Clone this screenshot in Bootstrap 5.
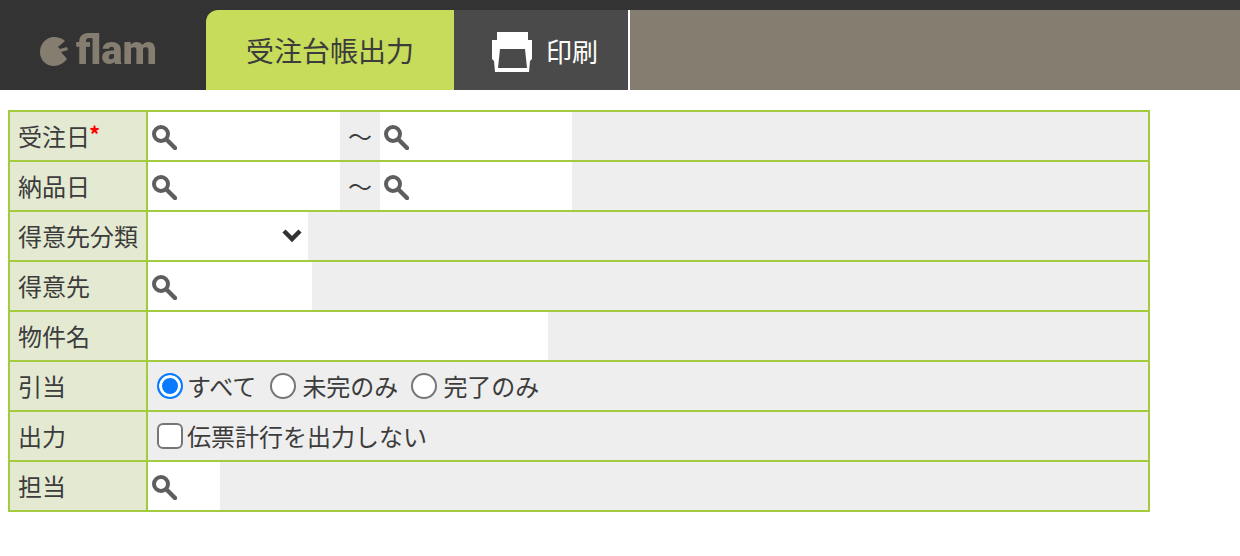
<!DOCTYPE html>
<html lang="ja">

<head>
    <meta charset="UTF-8">
    <meta name="viewport" content="width=device-width, initial-scale=1.0">
    <title>受注台帳出力</title>
    <link href="https://cdn.jsdelivr.net/npm/bootstrap@5.3.0/dist/css/bootstrap.min.css" rel="stylesheet">
    <style>
        body {
            background-color: #fff;
            color: #3c3c3c;
            font-family: "Noto Sans CJK JP", "Liberation Sans", sans-serif;
            font-size: 24px;
        }

        .app-header {
            height: 90px;
            padding-top: 10px;
            background-color: #333;
        }

        .app-logo {
            width: 206px;
            padding: 2px 0 0 40px;
            gap: 8px;
            color: #857d70;
        }

        .app-logo svg {
            filter: blur(.6px);
        }

        .app-logo span {
            font-family: Roboto, sans-serif;
            font-size: 40px;
            font-weight: 900;
            line-height: 1;
            filter: blur(.6px);
        }

        .tab-active {
            width: 248px;
            background-color: #c6dc5a;
            border-top-left-radius: 12px;
            font-size: 28px;
        }

        .tab-print {
            width: 176px;
            background-color: #4a4a4a;
            border-right: 2px solid #fff;
            color: #fff;
            font-size: 26px;
            padding-left: 38px;
            gap: 14px;
        }

        .tab-print svg {
            margin-top: 4px;
            filter: blur(.5px);
        }

        .header-rest {
            background-color: #857d70;
        }

        .form-area {
            padding: 20px 0 0 8px;
        }

        .order-form {
            width: 1142px;
            table-layout: fixed;
            --bs-table-color: #3c3c3c;
        }

        .order-form tr {
            height: 50px;
        }

        .order-form > tbody > tr > th,
        .order-form > tbody > tr > td {
            border: 2px solid #a4ca3f;
            vertical-align: middle;
        }

        .order-form > tbody > tr > th {
            width: 138px;
            padding: 0 0 0 8px;
            --bs-table-bg: #e4ead2;
            font-weight: 400;
            line-height: 48px;
            white-space: nowrap;
        }

        .order-form > tbody > tr > td {
            padding: 0;
            --bs-table-bg: #eee;
        }

        .req-mark {
            color: #f00;
            font-weight: 700;
            font-size: 22px;
            vertical-align: 3px;
            line-height: 1;
            margin-left: -1px;
        }

        .field-box {
            position: relative;
            height: 48px;
            flex: none;
        }

        .field-box .form-control,
        .field-box .form-select {
            height: 48px;
            border: 0;
            border-radius: 0;
            box-shadow: none;
        }

        .field-box .form-select {
            background-size: 20px 16px;
            background-position: right 6px center;
            background-image: url("data:image/svg+xml,%3csvg xmlns='http://www.w3.org/2000/svg' viewBox='0 0 20 16'%3e%3cpath fill='none' stroke='%23333' stroke-width='4.5' d='M2 3l8 8 8-8'/%3e%3c/svg%3e");
        }

        .w-date { width: 192px; }
        .w-kbn { width: 160px; }
        .w-cust { width: 164px; }
        .w-name { width: 400px; }
        .w-tan { width: 72px; }

        .search-mark {
            position: absolute;
            left: 3px;
            top: 12px;
            filter: blur(.7px);
        }

        .range-sep {
            width: 40px;
            text-align: center;
            line-height: 48px;
        }

        .opt-list {
            padding-left: 9px;
        }

        .opt-item {
            gap: 6px;
            margin: 0 13px 0 0;
            padding: 0;
            min-height: 0;
        }

        .opt-first {
            gap: 4px;
            margin-right: 14px;
        }

        .opt-item .form-check-input {
            width: 26px;
            height: 26px;
            margin: 0;
            float: none;
            flex: none;
            border: 2px solid #767676;
            box-shadow: none;
        }

        .opt-item .form-check-input[type=radio]:checked {
            background-color: #0a7bff;
            background-image: none;
            border-color: #0a7bff;
            box-shadow: inset 0 0 0 3px #fff;
        }

        .opt-item .form-check-label {
            line-height: 48px;
        }
    </style>
</head>

<body>
    <!-- ヘッダー -->
    <div class="app-header d-flex">
        <div class="app-logo d-flex align-items-center">
            <svg width="28" height="29" viewBox="0 0 28 29">
                <path fill="#857d70" d="M14 0c4 0 8 1 11 4l-7 6 2 2 7-2 1 3-7 2 6 7c-3 4-8 7-13 7C6 29 0 23 0 15S6 0 14 0z" />
            </svg>
            <span>flam</span>
        </div>
        <div class="tab-active d-flex align-items-center justify-content-center">受注台帳出力</div>
        <div class="tab-print d-flex align-items-center">
            <svg width="40" height="40" viewBox="0 0 40 40">
                <path fill="#fff" d="M5 0h31v8h4v19l-2 2-1 11H3L2 29l-2-2V8h5z" />
                <path fill="#4a4a4a" d="M8 17h25l2 19H6z" />
            </svg>
            <span>印刷</span>
        </div>
        <div class="header-rest flex-grow-1"></div>
    </div>

    <!-- 検索フォーム -->
    <div class="form-area">
        <table class="table table-bordered order-form mb-0">
            <tbody>
                <tr>
                    <th>受注日<span class="req-mark">*</span></th>
                    <td>
                        <div class="d-flex">
                            <div class="field-box w-date">
                                <input type="text" class="form-control">
                                <svg class="search-mark" width="26" height="26" viewBox="0 0 26 26"><circle cx="10" cy="10" r="7" fill="none" stroke="#5e5e5e" stroke-width="4" /><path d="M16 16l8 8" stroke="#5e5e5e" stroke-width="4.5" stroke-linecap="round" /></svg>
                            </div>
                            <div class="range-sep">〜</div>
                            <div class="field-box w-date">
                                <input type="text" class="form-control">
                                <svg class="search-mark" width="26" height="26" viewBox="0 0 26 26"><circle cx="10" cy="10" r="7" fill="none" stroke="#5e5e5e" stroke-width="4" /><path d="M16 16l8 8" stroke="#5e5e5e" stroke-width="4.5" stroke-linecap="round" /></svg>
                            </div>
                        </div>
                    </td>
                </tr>
                <tr>
                    <th>納品日</th>
                    <td>
                        <div class="d-flex">
                            <div class="field-box w-date">
                                <input type="text" class="form-control">
                                <svg class="search-mark" width="26" height="26" viewBox="0 0 26 26"><circle cx="10" cy="10" r="7" fill="none" stroke="#5e5e5e" stroke-width="4" /><path d="M16 16l8 8" stroke="#5e5e5e" stroke-width="4.5" stroke-linecap="round" /></svg>
                            </div>
                            <div class="range-sep">〜</div>
                            <div class="field-box w-date">
                                <input type="text" class="form-control">
                                <svg class="search-mark" width="26" height="26" viewBox="0 0 26 26"><circle cx="10" cy="10" r="7" fill="none" stroke="#5e5e5e" stroke-width="4" /><path d="M16 16l8 8" stroke="#5e5e5e" stroke-width="4.5" stroke-linecap="round" /></svg>
                            </div>
                        </div>
                    </td>
                </tr>
                <tr>
                    <th>得意先分類</th>
                    <td>
                        <div class="field-box w-kbn">
                            <select class="form-select"><option></option></select>
                        </div>
                    </td>
                </tr>
                <tr>
                    <th>得意先</th>
                    <td>
                        <div class="field-box w-cust">
                            <input type="text" class="form-control">
                            <svg class="search-mark" width="26" height="26" viewBox="0 0 26 26"><circle cx="10" cy="10" r="7" fill="none" stroke="#5e5e5e" stroke-width="4" /><path d="M16 16l8 8" stroke="#5e5e5e" stroke-width="4.5" stroke-linecap="round" /></svg>
                        </div>
                    </td>
                </tr>
                <tr>
                    <th>物件名</th>
                    <td>
                        <div class="field-box w-name">
                            <input type="text" class="form-control">
                        </div>
                    </td>
                </tr>
                <tr>
                    <th>引当</th>
                    <td>
                        <div class="opt-list d-flex align-items-center">
                            <div class="form-check opt-item opt-first d-flex align-items-center">
                                <input class="form-check-input" type="radio" name="hikiate" id="h1" checked>
                                <label class="form-check-label" for="h1">すべて</label>
                            </div>
                            <div class="form-check opt-item d-flex align-items-center">
                                <input class="form-check-input" type="radio" name="hikiate" id="h2">
                                <label class="form-check-label" for="h2">未完のみ</label>
                            </div>
                            <div class="form-check opt-item d-flex align-items-center">
                                <input class="form-check-input" type="radio" name="hikiate" id="h3">
                                <label class="form-check-label" for="h3">完了のみ</label>
                            </div>
                        </div>
                    </td>
                </tr>
                <tr>
                    <th>出力</th>
                    <td>
                        <div class="opt-list d-flex align-items-center">
                            <div class="form-check opt-item opt-first d-flex align-items-center">
                                <input class="form-check-input" type="checkbox" id="c1">
                                <label class="form-check-label" for="c1">伝票計行を出力しない</label>
                            </div>
                        </div>
                    </td>
                </tr>
                <tr>
                    <th>担当</th>
                    <td>
                        <div class="field-box w-tan">
                            <input type="text" class="form-control">
                            <svg class="search-mark" width="26" height="26" viewBox="0 0 26 26"><circle cx="10" cy="10" r="7" fill="none" stroke="#5e5e5e" stroke-width="4" /><path d="M16 16l8 8" stroke="#5e5e5e" stroke-width="4.5" stroke-linecap="round" /></svg>
                        </div>
                    </td>
                </tr>
            </tbody>
        </table>
    </div>

    <script src="https://cdn.jsdelivr.net/npm/bootstrap@5.3.0/dist/js/bootstrap.bundle.min.js"></script>
</body>

</html>
